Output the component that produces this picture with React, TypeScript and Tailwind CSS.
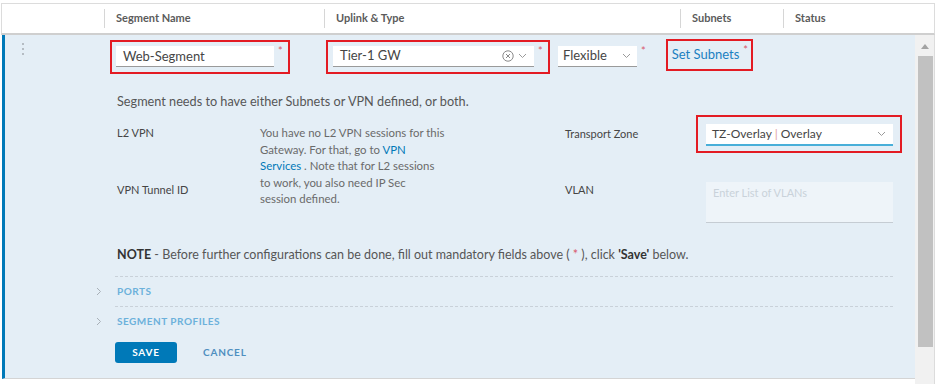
import React from 'react';

const Req = () => (
  <span className="text-[11px] leading-none text-[#d9586a] ml-[4px] -mt-[1px] self-start">*</span>
);

const Chevron = ({ className = '' }: { className?: string }) => (
  <svg width="9" height="6" viewBox="0 0 9 6" className={className}>
    <path d="M1 1l3.5 3.5L8 1" fill="none" stroke="#9a9a9a" strokeWidth="1" />
  </svg>
);

const ClearIcon = () => (
  <svg width="12" height="12" viewBox="0 0 12 12">
    <circle cx="6" cy="6" r="5.2" fill="none" stroke="#8a8a8a" strokeWidth="1" />
    <path d="M4 4l4 4M8 4l-4 4" stroke="#8a8a8a" strokeWidth="1" />
  </svg>
);

const RightChevron = () => (
  <svg width="6" height="9" viewBox="0 0 6 9">
    <path d="M1 1l3.5 3.5L1 8" fill="none" stroke="#a8b0b8" strokeWidth="1" />
  </svg>
);

export default function App() {
  const cols = [
    { w: 'w-[102px]', label: '' },
    { w: 'w-[220px]', label: 'Segment Name' },
    { w: 'w-[356px]', label: 'Uplink & Type' },
    { w: 'w-[103px]', label: 'Subnets' },
    { w: 'flex-1', label: 'Status' },
  ];

  return (
    <div className="w-[940px] h-[384px] bg-white overflow-hidden pl-[1px] pt-[3px] font-['Lato',sans-serif] text-[#565656]">
      {/* header */}
      <div className="w-[934px] h-[32px] flex border border-[#dcdcdc] border-b-2 border-b-[#cfcfcf] bg-white">
        {cols.map((c, i) => (
          <div key={i} className={`${c.w} flex items-center relative`}>
            {i > 0 && <div className="w-px h-[19px] bg-[#d6d6d6]" />}
            <span className="pl-[11px] text-[11px] font-bold text-[#5b5b5b]">{c.label}</span>
          </div>
        ))}
      </div>

      {/* body */}
      <div className="flex pl-[1px]">
        <div className="w-[913px] h-[344px] border-l-[3px] border-[#0079b8] border-b border-b-[#d4d4d4] bg-[#e4eef6]">
          {/* first row */}
          <div className="flex items-start pt-[4px]">
            <div className="w-[105px] pl-[17px] pt-[4px] flex flex-col gap-[3px]">
              <span className="w-[2px] h-[2px] bg-[#b5bcc3]" />
              <span className="w-[2px] h-[2px] bg-[#b5bcc3]" />
              <span className="w-[2px] h-[2px] bg-[#b5bcc3]" />
            </div>

            <div className="w-[180px] h-[34px] mt-[1px] border-2 border-[#e31b23] pl-[4px] pt-[4px] flex items-start">
              <div className="w-[158px] h-[21px] bg-white border-b border-[#9a9a9a] pl-[7px] text-[13px] leading-[21px] text-[#454545]">
                Web-Segment
              </div>
              <Req />
            </div>

            <div className="w-[224px] h-[34px] mt-[1px] ml-[36px] border-2 border-[#e31b23] pl-[5px] pt-[4px] flex items-start">
              <div className="w-[201px] h-[21px] bg-white border-b border-[#9a9a9a] pl-[7px] pr-[7px] flex items-center text-[13px] text-[#454545]">
                <span className="flex-1">Tier-1 GW</span>
                <ClearIcon />
                <Chevron className="ml-[4px]" />
              </div>
              <Req />
            </div>

            <div className="flex items-start ml-[8px] mt-[7px]">
              <div className="w-[79px] h-[21px] bg-white border-b border-[#9a9a9a] pl-[5px] pr-[6px] flex items-center text-[13px] text-[#454545]">
                <span className="flex-1">Flexible</span>
                <Chevron />
              </div>
              <Req />
            </div>

            <div className="w-[87px] h-[32px] ml-[20px] border-2 border-[#e31b23] pl-[4px] pt-[4px] flex items-start">
              <span className="text-[13px] leading-[18px] text-[#1b7fc1]">Set Subnets</span>
              <Req />
            </div>
          </div>

          {/* info */}
          <div className="pl-[112px]">
            <p className="mt-[18px] text-[12.7px] leading-[18px]">
              Segment needs to have either Subnets or VPN defined, or both.
            </p>

            <div className="flex mt-[5px]">
              <div className="grid grid-cols-[143px_190px] pt-[10px] text-[11px] leading-[16.5px]">
                <div className="flex flex-col">
                  <span className="text-[#454545]">L2 VPN</span>
                  <span className="mt-[40px] text-[#454545]">VPN Tunnel ID</span>
                </div>
                <div className="flex flex-col whitespace-nowrap text-[11.4px] text-[#6a6a6a]">
                  <span>You have no L2 VPN sessions for this</span>
                  <span>
                    Gateway. For that, go to <span className="text-[#0079b8]">VPN</span>
                  </span>
                  <span>
                    <span className="text-[#0079b8]">Services</span> . Note that for L2 sessions
                  </span>
                  <span>to work, you also need IP Sec</span>
                  <span>session defined.</span>
                </div>
              </div>

              <div className="ml-[115px] flex flex-col">
                <div className="flex items-center">
                  <span className="w-[131px] text-[11px] text-[#454545]">Transport Zone</span>
                  <div className="w-[206px] h-[38px] border-2 border-[#e31b23] pl-[8px] pt-[7px]">
                    <div className="w-[187px] h-[22px] bg-white border-b-2 border-[#49afd9] pl-[6px] pr-[7px] flex items-center text-[12px] text-[#454545]">
                      <span className="flex-1">
                        TZ-Overlay <span className="text-[#e0a0a0]">|</span> Overlay
                      </span>
                      <Chevron />
                    </div>
                  </div>
                </div>
                <div className="flex items-start mt-[29px]">
                  <span className="w-[141px] text-[11px] leading-[16px] text-[#454545]">VLAN</span>
                  <div className="w-[187px] h-[41px] bg-[#eef4f9] border-b border-[#c5ccd3] pl-[7px] pt-[3px] text-[11px] text-[#c9d2da]">
                    Enter List of VLANs
                  </div>
                </div>
              </div>
            </div>

            <p className="mt-[23px] text-[12.5px] leading-[18px]">
              <span className="font-bold text-[#333]">NOTE</span> - Before further configurations can be done, fill out mandatory fields above ({' '}
              <span className="text-[#d9586a]">*</span> ), click <span className="font-bold text-[#333]">'Save'</span> below.
            </p>
          </div>

          {/* accordions */}
          <div className="pl-[87px] mt-[12px] grid grid-cols-[23px_778px]">
            <div className="flex items-center h-[30px] pl-[4px]">
              <RightChevron />
            </div>
            <div className="h-[30px] border-t border-dashed border-[#c9d1d9] pl-[2px] flex items-center text-[10px] font-bold tracking-[0.5px] text-[#6cb1db]">
              PORTS
            </div>
            <div className="flex items-center h-[30px] pl-[4px]">
              <RightChevron />
            </div>
            <div className="h-[30px] border-t border-dashed border-[#c9d1d9] pl-[2px] flex items-center text-[10px] font-bold tracking-[0.5px] text-[#6cb1db]">
              SEGMENT PROFILES
            </div>
          </div>

          <div className="pl-[110px] mt-[6px] flex items-center">
            <button className="w-[62px] h-[21px] rounded-[3px] bg-[#0079b8] text-white text-[10px] font-bold tracking-[0.8px]">
              SAVE
            </button>
            <button className="ml-[26px] text-[10px] font-bold tracking-[0.8px] text-[#4f8fc0]">CANCEL</button>
          </div>
        </div>

        {/* scrollbar */}
        <div className="w-[20px] h-[349px] bg-[#f1f1f1] border-r border-[#dcdcdc] flex flex-col items-center">
          <svg width="8" height="5" viewBox="0 0 8 5" className="mt-[9px]">
            <path d="M0 5L4 0l4 5z" fill="#a3a3a3" />
          </svg>
          <div className="w-[15px] h-[291px] mt-[7px] ml-[1px] bg-[#c1c1c1]" />
        </div>
      </div>
    </div>
  );
}
